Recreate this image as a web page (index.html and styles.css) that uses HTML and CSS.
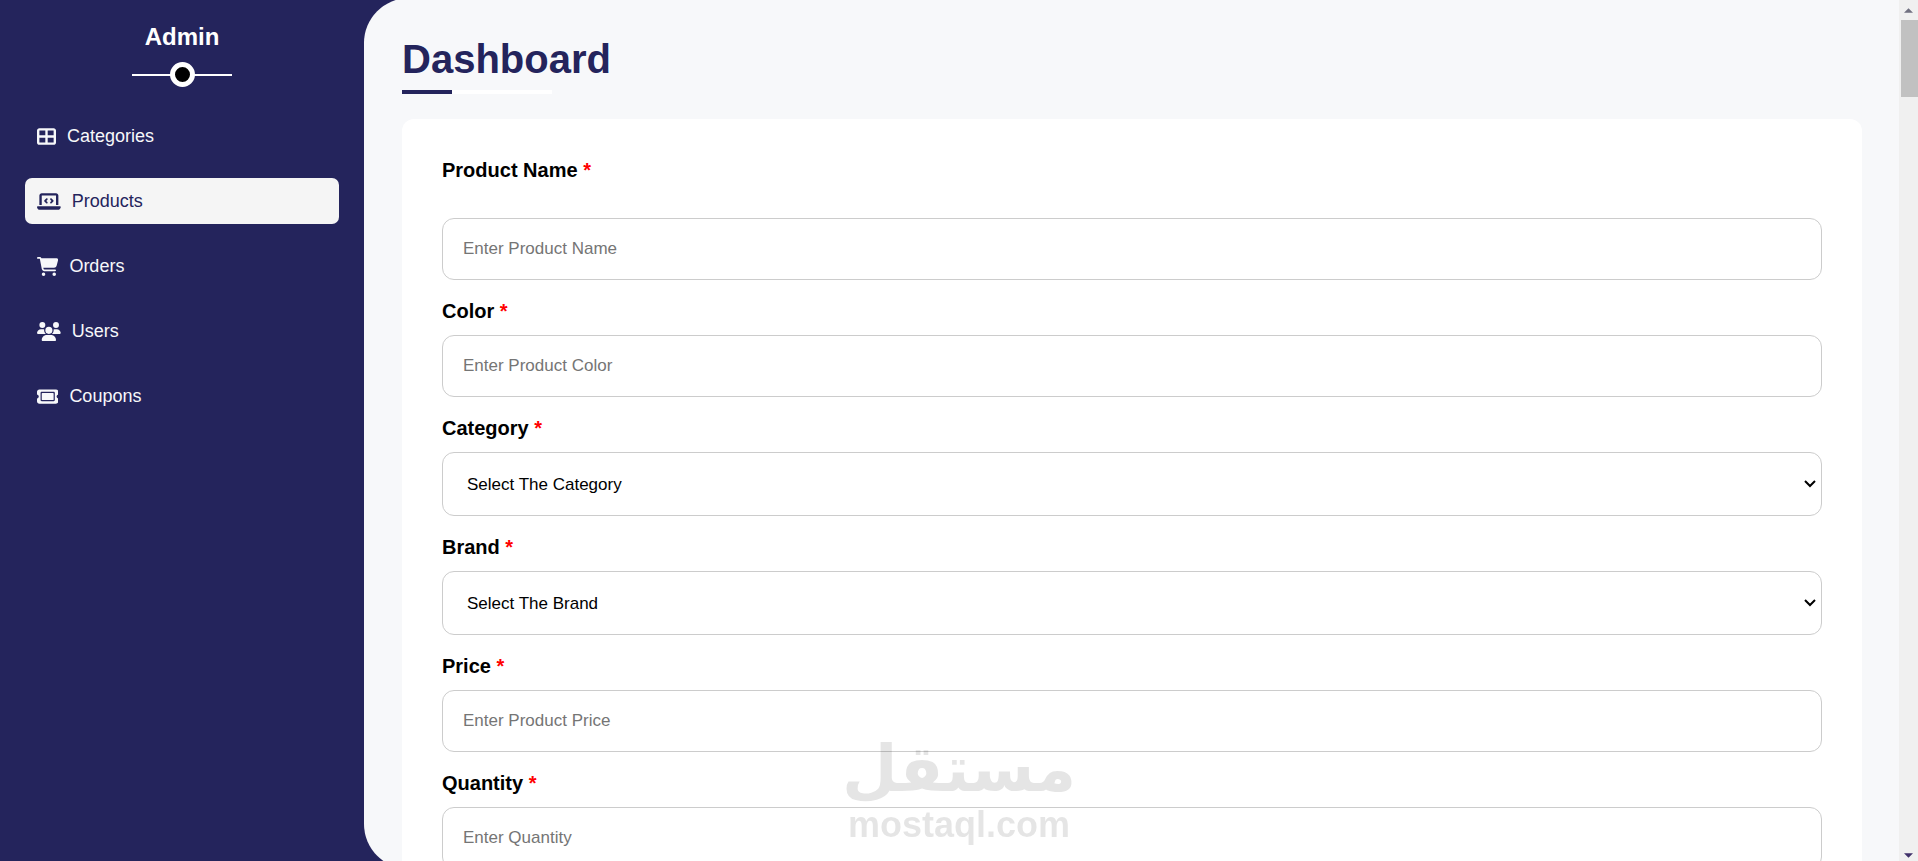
FILE: index.html
```html
<!DOCTYPE html>
<html lang="en">
<head>
	<meta charset="utf-8">
	<meta name="viewport" content="width=device-width, initial-scale=1">
	<title>Dashboard</title>
	<link rel="stylesheet" href="styles.css">
</head>
<body>
	<div class="page">
		<aside class="sidebar">
			<h3 class="brand">Admin</h3>
			<div class="divider"><span class="dot"></span></div>
			<nav>
				<ul class="menu">
					<li>
						<a href="#categories">
							<svg viewBox="0 0 512 512"><path d="M448 96V224H288V96H448zm0 192V416H288V288H448zM224 224H64V96H224V224zM64 288H224V416H64V288zM64 32C28.7 32 0 60.7 0 96V416c0 35.3 28.7 64 64 64H448c35.3 0 64-28.7 64-64V96c0-35.3-28.7-64-64-64H64z"/></svg>
							<span>Categories</span>
						</a>
					</li>
					<li>
						<a href="#products" class="active">
							<svg viewBox="0 0 640 512"><path d="M64 96c0-35.3 28.7-64 64-64H512c35.3 0 64 28.7 64 64V352H512V96H128V352H64V96zM0 403.2C0 392.6 8.6 384 19.2 384H620.8c10.6 0 19.2 8.6 19.2 19.2c0 42.4-34.4 76.8-76.8 76.8H76.8C34.4 480 0 445.6 0 403.2zM281 209l-31 31 31 31c9.4 9.4 9.4 24.6 0 33.9s-24.6 9.4-33.9 0l-48-48c-9.4-9.4-9.4-24.6 0-33.9l48-48c9.4-9.4 24.6-9.4 33.9 0s9.4 24.6 0 33.9zM393 175l48 48c9.4 9.4 9.4 24.6 0 33.9l-48 48c-9.4 9.4-24.6 9.4-33.9 0s-9.4-24.6 0-33.9l31-31-31-31c-9.4-9.4-9.4-24.6 0-33.9s24.6-9.4 33.9 0z"/></svg>
							<span>Products</span>
						</a>
					</li>
					<li>
						<a href="#orders">
							<svg viewBox="0 0 576 512"><path d="M0 24C0 10.7 10.7 0 24 0H69.5c22 0 41.5 12.8 50.6 32h411c26.3 0 45.5 25 38.6 50.4l-41 152.3c-8.5 31.4-37 53.3-69.5 53.3H170.7l5.4 28.5c2.2 11.3 12.1 19.5 23.6 19.5H488c13.3 0 24 10.7 24 24s-10.7 24-24 24H199.7c-34.6 0-64.3-24.6-70.7-58.5L77.4 54.5c-.7-3.8-4-6.5-7.9-6.5H24C10.7 48 0 37.3 0 24zM128 464a48 48 0 1 1 96 0 48 48 0 1 1 -96 0zm336-48a48 48 0 1 1 0 96 48 48 0 1 1 0-96z"/></svg>
							<span>Orders</span>
						</a>
					</li>
					<li>
						<a href="#users">
							<svg viewBox="0 0 640 512"><path d="M144 0a80 80 0 1 1 0 160A80 80 0 1 1 144 0zM512 0a80 80 0 1 1 0 160A80 80 0 1 1 512 0zM0 298.7C0 239.8 47.8 192 106.7 192h42.7c15.9 0 31 3.5 44.6 9.7c-1.3 7.2-1.9 14.7-1.9 22.3c0 38.2 16.8 72.5 43.3 96H21.3C9.6 320 0 310.4 0 298.7zM405.3 320c26.6-23.5 43.3-57.8 43.3-96c0-7.6-.7-15-1.9-22.3c13.6-6.3 28.7-9.7 44.6-9.7h42.7C592.2 192 640 239.8 640 298.7c0 11.8-9.6 21.3-21.3 21.3H405.3zM224 224a96 96 0 1 1 192 0 96 96 0 1 1 -192 0zM128 485.3C128 411.7 187.7 352 261.3 352H378.7C452.3 352 512 411.7 512 485.3c0 14.7-11.9 26.7-26.7 26.7H154.7c-14.7 0-26.7-11.9-26.7-26.7z"/></svg>
							<span>Users</span>
						</a>
					</li>
					<li>
						<a href="#coupons">
							<svg viewBox="0 0 576 512"><path d="M64 64C28.7 64 0 92.7 0 128v64c0 8.8 7.4 15.7 15.7 18.6C34.5 217.1 48 235 48 256s-13.5 38.9-32.3 45.4C7.4 304.3 0 311.2 0 320v64c0 35.3 28.7 64 64 64H512c35.3 0 64-28.7 64-64V320c0-8.8-7.4-15.7-15.7-18.6C541.5 294.9 528 277 528 256s13.5-38.9 32.3-45.4c8.3-2.9 15.7-9.8 15.7-18.6V128c0-35.3-28.7-64-64-64H64zm64 112l0 160c0 8.8 7.2 16 16 16H432c8.8 0 16-7.2 16-16V176c0-8.8-7.2-16-16-16H144c-8.8 0-16 7.2-16 16zM96 160c0-17.7 14.3-32 32-32H448c17.7 0 32 14.3 32 32V352c0 17.7-14.3 32-32 32H128c-17.7 0-32-14.3-32-32V160z"/></svg>
							<span>Coupons</span>
						</a>
					</li>
				</ul>
			</nav>
		</aside>

		<main class="content">
			<h1 class="title">Dashboard</h1>
			<div class="underline"><span></span></div>

			<form class="card">
				<label class="first" for="name">Product Name <span>*</span></label>
				<input type="text" id="name" placeholder="Enter Product Name">

				<label for="color">Color <span>*</span></label>
				<input type="text" id="color" placeholder="Enter Product Color">

				<label for="category">Category <span>*</span></label>
				<div class="select">
					<select id="category">
						<option>Select The Category</option>
					</select>
					<svg viewBox="0 0 12 8"><path d="M1 1L6 6L11 1"/></svg>
				</div>

				<label for="brand">Brand <span>*</span></label>
				<div class="select">
					<select id="brand">
						<option>Select The Brand</option>
					</select>
					<svg viewBox="0 0 12 8"><path d="M1 1L6 6L11 1"/></svg>
				</div>

				<label for="price">Price <span>*</span></label>
				<input type="text" id="price" placeholder="Enter Product Price">

				<label for="quantity">Quantity <span>*</span></label>
				<input type="text" id="quantity" placeholder="Enter Quantity">
			</form>
		</main>

		<!-- page scroll track -->
		<div class="scroll">
			<svg viewBox="0 0 10 5"><path d="M0 5L5 0L10 5z"/></svg>
			<div class="thumb"></div>
			<svg class="down" viewBox="0 0 10 5"><path d="M0 0L5 5L10 0z"/></svg>
		</div>
	</div>

	<div class="watermark">
		<span class="mark" lang="ar" dir="rtl">مستقل</span>
		<span class="site">mostaql.com</span>
	</div>
</body>
</html>
```
FILE: styles.css
```css
* {
	box-sizing: border-box;
	margin: 0;
	padding: 0;
}

body {
	font-family: "Liberation Sans", Arial, sans-serif;
	background-color: #24245c;
	overflow: hidden;
}

.page {
	display: flex;
	height: 100vh;
}

/* sidebar */
.sidebar {
	width: 364px;
	flex-shrink: 0;
	padding: 23px 25px;
	color: white;
}
.brand {
	font-size: 24px;
	line-height: 28px;
	text-align: center;
}
.divider {
	display: flex;
	align-items: center;
	justify-content: center;
	width: 100px;
	height: 25px;
	margin: 11px auto 26px;
	background: linear-gradient(white, white) center / 100% 2px no-repeat;
}
.dot {
	width: 25px;
	height: 25px;
	border: 5px solid white;
	border-radius: 50%;
	background-color: black;
}
.menu {
	display: flex;
	flex-direction: column;
	gap: 19px;
	list-style: none;
}
.menu a {
	display: flex;
	align-items: center;
	gap: 11px;
	height: 46px;
	padding: 0 12px;
	border-radius: 7px;
	color: #f7f8fa;
	font-size: 18px;
	text-decoration: none;
}
.menu a.active {
	background-color: #f5f5f5;
	color: #24245c;
}
.menu svg {
	height: 19px;
	fill: currentColor;
}

/* content */
.content {
	flex: 1;
	height: calc(100vh + 10px);
	margin-top: -2px;
	padding: 38px 37px 0 38px;
	border-radius: 45px 0 0 45px;
	background-color: #f7f8fa;
	overflow: hidden;
}
.title {
	color: #24245c;
	font-size: 40px;
	line-height: 46px;
}
.underline {
	width: 150px;
	height: 4px;
	margin: 8px 0 25px;
	background-color: white;
}
.underline span {
	display: block;
	width: 50px;
	height: 4px;
	background-color: #24245c;
}

/* form */
.card {
	display: flex;
	flex-direction: column;
	padding: 40px;
	border-radius: 12px;
	background-color: white;
}
.card label {
	padding: 20px 0 12px;
	font-size: 20px;
	font-weight: bold;
	line-height: 23px;
}
.card label.first {
	padding: 0 0 36px;
}
.card label span {
	color: red;
}
.card input,
.card select {
	width: 100%;
	height: 62px;
	padding: 0 20px;
	border: 1px solid #ccc;
	border-radius: 12px;
	background-color: white;
	color: black;
	font-family: inherit;
	font-size: 17px;
}
.card input::placeholder {
	color: #757575;
}
.select {
	position: relative;
}
.card select {
	display: block;
	height: 64px;
	padding: 0 24px;
	appearance: none;
}
.select svg {
	position: absolute;
	top: 28px;
	right: 6px;
	width: 12px;
	height: 8px;
	fill: none;
	stroke: black;
	stroke-width: 2;
	pointer-events: none;
}

/* scroll track */
.scroll {
	display: flex;
	flex-direction: column;
	align-items: center;
	width: 19px;
	padding: 8px 0 3px;
	background-color: #f0f0f0;
}
.scroll svg {
	width: 9px;
	height: 5px;
	fill: #707080;
}
.scroll svg.down {
	margin-top: auto;
	fill: #40306a;
}
.thumb {
	align-self: flex-end;
	width: 17px;
	height: 77px;
	margin-top: 7px;
	background-color: #c1c1c1;
}

.watermark {
	position: fixed;
	right: 0;
	bottom: 16px;
	left: 0;
	display: flex;
	flex-direction: column;
	align-items: center;
	color: black;
	opacity: 0.1;
	font-weight: bold;
	pointer-events: none;
}
.mark {
	font-family: "DejaVu Sans", sans-serif;
	font-size: 64px;
	line-height: 72px;
}
.site {
	font-size: 36px;
	line-height: 40px;
}
```
